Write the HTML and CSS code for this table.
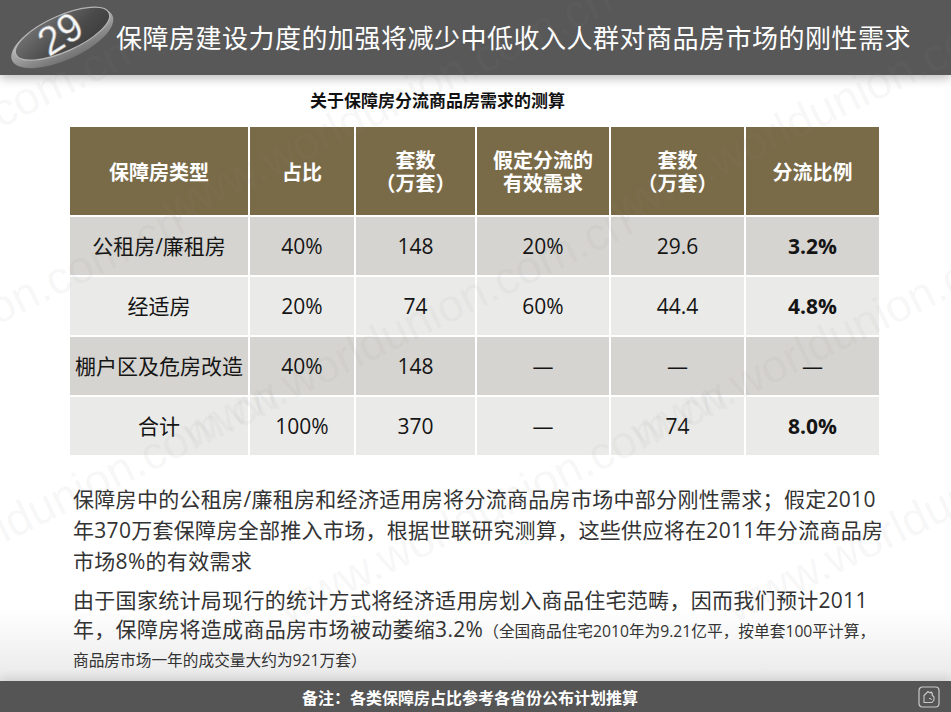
FILE: index.html
```html
<!DOCTYPE html>
<html lang="zh-CN">
<head>
<meta charset="utf-8">
<title>保障房建设力度的加强将减少中低收入人群对商品房市场的刚性需求</title>
<link rel="stylesheet" href="styles.css">
</head>
<body>
<div class="slide">
  <header class="topbar">
    <svg class="badge" width="116" height="75" viewBox="0 0 116 75">
      <defs>
        <linearGradient id="rim" x1="0" y1="0" x2="0" y2="1">
          <stop offset="0" stop-color="#d0d0d0"/>
          <stop offset="1" stop-color="#727272"/>
        </linearGradient>
        <linearGradient id="face" x1="0" y1="0" x2="1" y2="1">
          <stop offset="0" stop-color="#7a7a7a"/>
          <stop offset="0.6" stop-color="#4a4a4a"/>
          <stop offset="1" stop-color="#3a3a3a"/>
        </linearGradient>
      </defs>
      <g transform="rotate(-24 62 35)">
        <ellipse cx="61" cy="38" rx="55" ry="22" fill="url(#rim)"/>
        <ellipse cx="63" cy="34" rx="51" ry="18" fill="url(#face)" stroke="#b5b5b5" stroke-width="1.2"/>
      </g>
      <text class="badge-num" x="36" y="47" transform="rotate(-32 60 30)">29</text>
    </svg>
    <h1 class="title">保障房建设力度的加强将减少中低收入人群对商品房市场的刚性需求</h1>
  </header>

  <main class="content">
    <h2 class="caption">关于保障房分流商品房需求的测算</h2>
    <table class="data">
      <colgroup>
        <col class="c1"><col class="c2"><col class="c3"><col class="c4"><col class="c5"><col class="c6">
      </colgroup>
      <thead>
        <tr>
          <th>保障房类型</th>
          <th>占比</th>
          <th>套数<br>（万套）</th>
          <th>假定分流的<br>有效需求</th>
          <th>套数<br>（万套）</th>
          <th>分流比例</th>
        </tr>
      </thead>
      <tbody>
        <tr class="dark">
          <td>公租房/廉租房</td><td>40%</td><td>148</td><td>20%</td><td>29.6</td><td class="strong">3.2%</td>
        </tr>
        <tr class="light">
          <td>经适房</td><td>20%</td><td>74</td><td>60%</td><td>44.4</td><td class="strong">4.8%</td>
        </tr>
        <tr class="dark">
          <td>棚户区及危房改造</td><td>40%</td><td>148</td><td>—</td><td>—</td><td>—</td>
        </tr>
        <tr class="light">
          <td>合计</td><td>100%</td><td>370</td><td>—</td><td>74</td><td class="strong">8.0%</td>
        </tr>
      </tbody>
    </table>

    <div class="notes">
      <p>保障房中的公租房/廉租房和经济适用房将分流商品房市场中部分刚性需求；假定2010<br>年370万套保障房全部推入市场，根据世联研究测算，这些供应将在2011年分流商品房<br>市场8%的有效需求</p>
      <p class="tight">由于国家统计局现行的统计方式将经济适用房划入商品住宅范畴，因而我们预计2011<br>年，保障房将造成商品房市场被动萎缩3.2%<span class="small">（全国商品住宅2010年为9.21亿平，按单套100平计算，<br>商品房市场一年的成交量大约为921万套）</span></p>
    </div>
  </main>

  <footer class="bottombar">
    <span></span>
    <span class="remark">备注：各类保障房占比参考各省份公布计划推算</span>
    <svg class="home" width="22" height="22" viewBox="0 0 22 22">
      <rect x="1" y="1" width="20" height="20" rx="3.5" fill="none" stroke="#c9c9c9" stroke-width="1.2"/>
      <path d="M6 16.5 V9.5 L10 5.5 L12 7 L13 6 L14.5 7.5 L14 9 L16 11 V14 L14 16.5 Z" fill="none" stroke="#c9c9c9" stroke-width="1.1" stroke-linejoin="round"/>
      <path d="M11 12.5 Q13 11.5 13.5 14" fill="none" stroke="#c9c9c9" stroke-width="1"/>
    </svg>
  </footer>

  <div class="watermarks" aria-hidden="true">
    <span class="wm" style="left:-307px;top:286px">www.worldunion.com.cn</span>
    <span class="wm" style="left:175px;top:232px">www.worldunion.com.cn</span>
    <span class="wm" style="left:623px;top:232px">www.worldunion.com.cn</span>
    <span class="wm" style="left:-253px;top:455px">www.worldunion.com.cn</span>
    <span class="wm" style="left:195px;top:455px">www.worldunion.com.cn</span>
    <span class="wm" style="left:643px;top:455px">www.worldunion.com.cn</span>
    <span class="wm" style="left:-158px;top:630px">www.worldunion.com.cn</span>
    <span class="wm" style="left:290px;top:630px">www.worldunion.com.cn</span>
    <span class="wm" style="left:738px;top:630px">www.worldunion.com.cn</span>
  </div>
</div>
</body>
</html>
```

FILE: styles.css
```css
* { box-sizing: border-box; }

html, body {
  margin: 0;
  padding: 0;
  background: #ffffff;
}

body {
  font-family: "Open Sans", "Noto Sans CJK SC", sans-serif;
  color: #1a1a1a;
}

.slide {
  position: relative;
  width: 951px;
  height: 712px;
  overflow: hidden;
  display: flex;
  flex-direction: column;
  background: linear-gradient(to bottom, #ffffff 0, #ffffff 610px, #e9e9e9 681px);
}

/* ---------- top bar ---------- */
.topbar {
  position: relative;
  z-index: 1;
  height: 75px;
  flex: none;
  display: flex;
  align-items: center;
  background: #585858;
  box-shadow: 0 3px 10px rgba(0, 0, 0, 0.28);
}

.badge {
  flex: none;
  display: block;
}

.badge-num {
  font-family: "Liberation Sans", sans-serif;
  font-size: 40px;
  fill: #f6f6f6;
  stroke: #9a9a9a;
  stroke-width: 0.6;
}

.title {
  margin: 0 0 2px 0;
  font-family: "Noto Sans CJK SC", sans-serif;
  font-weight: 400;
  font-size: 26px;
  letter-spacing: 0.5px;
  line-height: 34px;
  color: #ffffff;
  white-space: nowrap;
}

/* ---------- content ---------- */
.content {
  flex: 1;
  min-height: 0;
  display: flex;
  flex-direction: column;
}

.caption {
  margin: 13px 0 0 310px;
  font-family: "Noto Sans CJK SC", sans-serif;
  font-weight: 700;
  font-size: 17px;
  line-height: 24px;
  color: #111111;
}

.data {
  margin: 13px 0 0 68px;
  border-collapse: separate;
  border-spacing: 2px;
  table-layout: fixed;
  width: 813px;
}

.data .c1 { width: 178px; }
.data .c2 { width: 104px; }
.data .c3 { width: 119px; }
.data .c4 { width: 132px; }
.data .c5 { width: 133px; }
.data .c6 { width: 133px; }

.data th {
  height: 88px;
  padding: 0;
  background: #7a6b48;
  color: #ffffff;
  font-family: "Noto Sans CJK SC", sans-serif;
  font-weight: 700;
  font-size: 20px;
  line-height: 23px;
  text-align: center;
  vertical-align: middle;
}

.data td {
  height: 58px;
  padding: 0;
  font-size: 21px;
  line-height: 26px;
  text-align: center;
  vertical-align: middle;
  color: #151515;
  white-space: nowrap;
}

.data tr.dark td { background: #d6d4d0; }
.data tr.light td { background: #eaeae8; }

.data td.strong { font-weight: 700; }

.notes {
  margin: 27px 0 0 73px;
}

.notes p {
  margin: 0 0 9px 0;
  font-size: 21px;
  line-height: 31px;
  letter-spacing: 0.3px;
  color: #333333;
  white-space: nowrap;
}

.notes p.tight {
  margin-bottom: 0;
  line-height: 29px;
}

.notes .small {
  font-size: 15.7px;
  line-height: 24px;
  letter-spacing: 0;
}

/* ---------- bottom bar ---------- */
.bottombar {
  position: relative;
  z-index: 1;
  flex: none;
  height: 31px;
  display: grid;
  grid-template-columns: 1fr auto 1fr;
  align-items: center;
  padding-right: 11px;
  background: #555555;
  box-shadow: 0 -4px 10px rgba(0, 0, 0, 0.10);
}

.remark {
  font-family: "Noto Sans CJK SC", sans-serif;
  font-weight: 700;
  font-size: 16px;
  line-height: 20px;
  color: #ffffff;
}

.home {
  justify-self: end;
  display: block;
}

/* ---------- watermark ---------- */
.watermarks {
  position: absolute;
  inset: 0;
  z-index: 2;
  pointer-events: none;
}

.wm {
  position: absolute;
  font-family: "Liberation Sans", sans-serif;
  font-size: 46px;
  line-height: 1;
  white-space: nowrap;
  color: rgba(140, 140, 140, 0.075);
  transform-origin: 0 100%;
  transform: translateY(-100%) rotate(-26deg);
}
```
